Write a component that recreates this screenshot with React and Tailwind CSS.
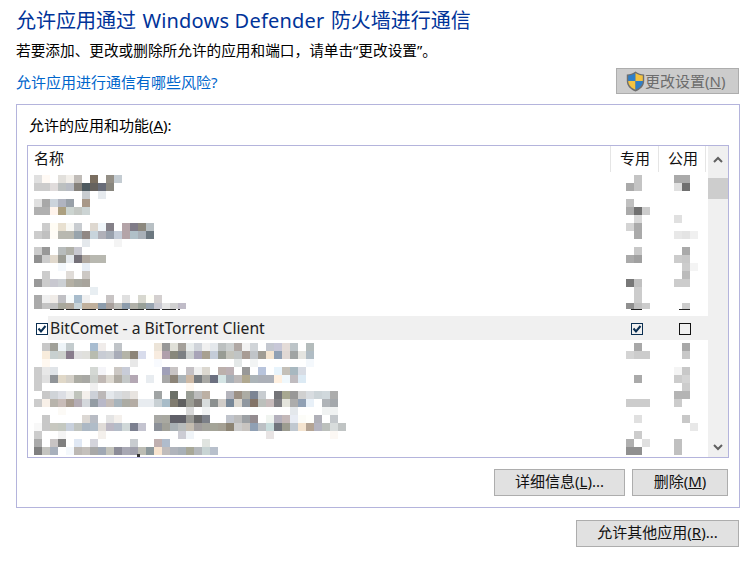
const FONT = "font-['Noto_Sans','Noto_Sans_CJK_SC',sans-serif]";

// Blurred list contents, one string per mosaic row: "column:colour" on an 8px grid starting at x=34
const topRows = [
  [175, "0:e0e0e0 1:fffaf5 3:e2e0dc 4:f2efea 5:c0bcb8 7:7a6e60 9:948f86 10:c4ccd2 75:c4c4c4 80:aaaaaa 81:aaaaaa"],
  [183, "0:cccccc 1:cccccc 2:e0dcdc 3:bcc0c0 4:b8bcc4 5:84807a 6:4e5a60 7:66625e 8:686c78 9:88867e 74:aaaaaa 75:c4c4c4 80:e0e0e0 81:707070"],
  [191, "6:c8ccd0 8:e6eaee"],
  [199, "0:e0e0e0 1:a8a8a8 2:ccd4dc 3:b0b4c0 4:98a0a8 6:a89888 74:c0c0c0"],
  [207, "0:b0b0b0 1:b0b0b0 2:fff4ec 3:aca080 4:ccd4d0 5:c4c8c4 6:ccd4d4 74:aaaaaa 75:707070 76:cccccc"],
  [215, "75:d8d8d8 80:e0e0e0"],
  [223, "1:cccccc 2:fffcf4 3:e8e0d0 4:f8f8f4 5:c8ccd0 7:ded8d0 8:f0f6fa 9:848088 11:b4a4a8 12:807c88 13:8c887e 14:b8c0c4 74:d4d4d4 75:aaaaaa"],
  [231, "0:cccccc 1:c0c0c0 2:fffcf6 3:b8b8b0 4:b8b8b0 5:98a4ac 6:908884 7:c8d4dc 8:b0b0b8 9:98a0ac 10:c4ccd8 11:b4a4a8 12:b0c0c8 13:a8b0b8 14:6c7880 75:aaaaaa 80:e8e8e8 81:e4e4e4 82:f0f0f0"],
  [239, "6:e4e8ec 10:f4f4f4"],
  [247, "0:cccccc 1:989898 3:b8bcbc 4:b0b0a8 5:c8c8d0 75:c8c8c8 81:aaaaaa"],
  [255, "0:909090 1:cccccc 2:e0d8cc 3:9c9c94 4:e4e8ec 5:747078 6:b0a8a0 7:b8b8b0 8:b8b8b0 74:aaaaaa 75:a0a0a0 80:cccccc 81:c8c8c8"],
  [263, "3:f4f8fc 6:e8eef6 81:cccccc 82:f4f4f4"],
  [271, "1:cccccc 4:e0dcd8 6:ccc8c4 81:bbbbbb"],
  [279, "0:999999 1:cccccc 2:c8c8d0 3:ccd0d4 4:b4b0a4 5:a8a8a0 6:a8a49c 74:787878 75:c0c0c0 80:cccccc 81:cccccc"],
  [287, "7:e8eef2 75:cccccc"],
  [295, "0:aaaaaa 1:f0f0f0 2:f0ece8 3:c0c0c4 4:f8fcfc 5:a8bccc 6:f0f0f0 9:c8c4c4 11:e0e0e0 13:d8d8d0 14:fffff8 15:d4d0d0 75:cccccc"],
  [303, "0:aaaaaa 1:c4c4c4 2:c0c0c0 3:a8a89c 4:b0a89c 5:c8d4d8 6:c0b09c 7:c0b09c 8:8c9cac 9:a8a09c 10:c0c0bc 11:8c9cac 12:b0b0a8 13:98a098 14:98a4b0 15:c8c8d0 16:e4e4e4 17:d0d0d0 18:c0bcc8 74:909090 75:c0c0c0 76:cccccc 81:cccccc"],
];

const bottomRows = [
  [343, "1:c8c8c8 2:a0a098 3:eef4f8 4:c4ccce 7:a8bcd0 8:f0ecea 10:c0c4c8 15:ece4d8 16:989898 17:e0e0d8 18:a4a09a 19:e8ecec 20:d0d4da 21:f0f0f0 22:e4e8ec 23:bcc0c0 24:ccd0d0 25:b0a8a4 26:f2f2f2 27:d0d4d8 29:c4c8d0 30:c8c8d8 31:e4dcd8 32:bcc4c8 34:b4bcbc 75:a8a8a8 81:a8a8a8"],
  [351, "1:f8ecdc 2:c8d0d0 3:ccd0cc 4:887c8c 5:e0e0e0 6:e0e0dc 7:b8bcb0 8:c8ccd4 9:ccd0d4 10:a8acb8 11:b4b4a8 12:8c8478 13:d8dcec 15:f8ece0 16:b0a0ac 17:88887c 18:7c8084 19:ccd0d0 20:a8a4b8 21:a8a090 22:c4ccd8 23:989c94 24:c4c4bc 25:c0c4c4 26:a89c94 27:c0c4c8 28:a09c94 29:f4e4d0 30:90a0b4 31:e0d8d4 32:a0a4a4 33:e4e4e0 34:b0bcc4 74:d4d4d4 75:cccccc 76:cccccc 81:c8c8c8"],
  [359, "1:fff8f0 12:e8e8e8 15:f8fafe 25:e4e8e8 27:f2f4f4 34:f4f8fc"],
  [367, "0:cccccc 1:e8e8e8 2:e0e4e8 7:d4d8d4 8:f4f4f8 10:ccc8c4 11:c8ccd8 16:a0a0b8 17:c8c4c4 19:c4c0c4 20:f0f0f0 21:dcd8d0 23:bcb0ac 24:bcb0b4 26:989898 28:b8c4dc 30:e8f4fc 31:c4c0b8 32:a8b8c0 33:d8dce4 80:f4f4f4 81:c8c8c8"],
  [375, "0:cccccc 1:e0e0e0 2:909498 3:e0d8c8 4:d4d0c8 5:acaca4 6:a8a8a4 7:ccd0cc 8:c0b8b4 9:dcd8d0 10:b0aca4 11:c4c8c8 12:b4a8b4 14:e8ecf0 16:a8a8a8 17:8c8478 18:acb4b8 19:ccb8a4 20:787c80 21:a8a8a4 22:6c7080 23:d4e4e4 24:a8b0b8 25:bcb8b8 26:b0a890 27:acb4b8 28:acb0b8 29:acb0b8 30:fff0e0 31:f0f8fc 32:c0bcc0 33:dceaf4 75:aaaaaa 80:cccccc 81:d4d4d4"],
  [383, "0:cccccc 7:f0f0f0 19:fff8f0 81:cccccc"],
  [391, "1:c8c8c8 2:d0d4d8 3:dcdee4 4:ececec 5:c0c4bc 6:f4f0ec 7:ccd0d8 8:bcb8b8 9:e4e8ec 10:d8dce0 11:d8d8d8 12:e8e4e0 15:a0a4a4 17:6c7068 19:989c94 20:bcbcbc 21:bcb0a4 24:b4b4bc 25:9c9084 26:acaca4 27:7c8494 28:c8ccd0 30:747478 31:a8a890 32:989898 33:d0d0d0 34:d8dce0 35:ccd4d8 36:d0d8dc 37:acacac 80:b4b4b4 81:b4b4b4"],
  [399, "0:cccccc 1:f8f0e8 2:b8b4ac 3:c8bcb8 4:a89c90 5:b4acb4 6:d4d8dc 7:949ca4 8:b8b8c8 9:c4bcb8 10:a8b4bc 11:acaca4 12:b4aca4 13:e8ecf0 14:e8ecf0 15:c8d0d4 16:a8bcc8 17:807c70 18:606060 19:9c9c94 20:807c78 21:d8dcdc 22:8c9090 23:d0ccc8 24:788898 25:dcd8d0 26:9098a0 27:847468 28:bcc0bc 29:c8bcbc 30:808084 31:e4e4dc 32:acacac 33:90a0b4 34:e8f0f8 36:b0b4b8 37:a4a8ac 74:cccccc 75:cccccc 76:cccccc 80:cccccc"],
  [407, "3:fcfaf6 19:d8d8d8 21:f0f2f2 32:e4e8ec 36:f0f2f2 37:f0f2f2"],
  [415, "1:c8c8c8 6:dcd8d4 7:b8bcc4 9:e4e4e4 10:f4f0ec 15:a8a8a4 16:a8a8a0 17:606068 18:606068 19:989894 20:686868 21:7c8088 24:c0c4cc 25:bcbcbc 26:9ca0a4 27:948c90 29:f0f4f0 30:b4b0bc 31:c4b8b8 32:e8ecf4 33:fcfcf8 34:fffffc 35:b0b0b8 37:c4c8cc 75:e0e0e0 81:c8c8c8"],
  [423, "0:f8f8f8 1:c8c8c8 2:c8c8c0 3:c4c8c0 4:c8d0dc 5:c0c4c0 6:acb8c4 7:b0bcc8 8:e0dcd8 9:bcb8c4 10:b4bcc8 11:d0d8d8 12:7c8090 13:c4c4d0 15:8c9098 16:a0a098 17:a8b0b4 18:b8bcbc 19:c4bcb0 20:a09c9c 21:a4a49c 22:a4a498 23:a4a094 24:8c8474 25:cccccc 26:c8c4c0 27:90a0b4 28:bcc0c4 29:c8dcdc 30:70747c 31:9c9c90 32:c0c8d0 33:f4e4d0 34:b4a494 35:b4b4c0 36:bcc0bc 37:d8dcdc 38:c0c4c4 82:e8e8e8"],
  [431, "0:cccccc 3:f4f4f4 8:f4f0ec 18:ccccd4 19:f0f4f8 29:e8e4e4 37:fcf8f4 75:cccccc"],
  [439, "0:aaaaaa 2:c8c4c4 3:808080 5:e0e8f4 7:d4d4dc 12:c8ccd0 15:c0b0b0 16:b0bccc 21:e0e4e0 74:b0b0b0 76:e0e0e0 80:c0c0c0"],
  [447, "0:808080 1:c4c4c0 2:a8b0bc 4:f4f8fc 5:bcb8b4 6:c4c0bc 7:a8a8a8 8:a0a8b4 9:c4c4bc 10:8c8c98 11:a8a8b4 12:a0a0ac 13:bcbcb4 14:8c989c 15:f8e4d0 16:c0bcbc 17:b0b4bc 18:a8b0b8 19:a8a898 20:b4b8bc 21:c8d4d4 22:b8c0cc 74:909090 75:909090 80:c0c0c0"],
];

const Mosaic = ({ rows, top, height, children }) => (
  <svg width="678" height={height} viewBox={`28 ${top} 678 ${height}`} className="block shrink-0">
    {rows.flatMap(([y, cells]) =>
      cells.split(" ").map((cell) => {
        const [col, color] = cell.split(":");
        return (
          <rect
            key={`${y}-${col}`}
            x={34 + 8 * Number(col)}
            y={y}
            width="8"
            height={y === 303 ? 6 : 8}
            fill={`#${color}`}
          />
        );
      })
    )}
    {children}
  </svg>
);

const CheckBox = ({ checked }) => (
  <svg width="12" height="12" viewBox="0 0 12 12" className="block shrink-0 mt-[1px]">
    <rect x="0.5" y="0.5" width="11" height="11" fill="none" stroke={checked ? "#0b2f52" : "#111111"} />
    {checked && <path d="M2.5 5.5 L5 8.5 L9.5 3" fill="none" stroke="#0b2f52" strokeWidth="2" />}
  </svg>
);

const Shield = () => (
  <svg width="19" height="21" viewBox="0 0 19 21" className="block shrink-0">
    <path d="M9.5 0.5 C7 2.6 4 3.4 0.8 3.4 V10 C0.8 15 4.5 18.5 9.5 20.5 C14.5 18.5 18.2 15 18.2 10 V3.4 C15 3.4 12 2.6 9.5 0.5 Z" fill="#6f6f6f" />
    <path d="M9.5 2 C7.4 3.6 5 4.4 2.2 4.6 V10 H9.5 Z" fill="#2f7fc8" />
    <path d="M9.5 2 C11.6 3.6 14 4.4 16.8 4.6 V10 H9.5 Z" fill="#f4c33f" />
    <path d="M2.2 10 H9.5 V18.8 C5.4 17 2.4 14.4 2.2 10 Z" fill="#f4c33f" />
    <path d="M16.8 10 H9.5 V18.8 C13.6 17 16.6 14.4 16.8 10 Z" fill="#2f7fc8" />
  </svg>
);

const Chevron = ({ d }) => (
  <svg width="10" height="7" viewBox="0 0 10 7" className="block">
    <path d={d} fill="none" stroke="#606060" strokeWidth="2" />
  </svg>
);

const Button = ({ className = "", children }) => (
  <button className={`h-[27px] pb-[2px] flex items-center justify-center bg-[#e1e1e1] border border-[#adadad] text-[15px] text-[#111] ${className}`}>
    {children}
  </button>
);

export default function App() {
  return (
    <div className={`${FONT} w-[756px] h-[564px] overflow-hidden bg-white px-4 pt-2 text-[15px] text-black`}>
      <h1 className="h-[26px] leading-[26px] text-[20px] font-normal text-[#003399] whitespace-nowrap">
        允许应用通过<span className="px-[1px] tracking-[0.2px]"> Windows Defender </span>防火墙进行通信
      </h1>
      <p className="mt-[7px] h-[19px] leading-[18px] text-[14.67px] whitespace-nowrap">
        若要添加、更改或删除所允许的应用和端口，请单击“更改设置”。
      </p>

      <div className="mt-2 h-[26px] w-[723px] flex items-center justify-between">
        <a className="mt-[1px] text-[#0066cc] leading-[18px]">允许应用进行通信有哪些风险?</a>
        <button className="w-[123px] h-[26px] flex items-center pl-[9px] bg-[#cccccc] border border-[#adadad] text-[#6d6d6d]">
          <Shield />
          <span className="whitespace-nowrap">更改设置(<u>N</u>)</span>
        </button>
      </div>

      <div className="mt-[10px] w-[724px] h-[404px] border border-[#b4b4dc] px-[10px] pt-[11px]">
        <div className="h-[18px] leading-[18px] pl-[2px]">
          允许的应用和功能(<u>A</u>):
        </div>
        <div className="mt-[11px] w-[702px] h-[313px] border border-[#b4b4dc] flex">
          <div className="w-[680px] flex flex-col">
            <div className="h-[26px] flex shrink-0 text-[#111]">
              <div className="w-[582px] pl-[6px] leading-[24px]">名称</div>
              <div className="w-[48px] border-l border-[#e5e5e5] pl-[9px] leading-[24px]">专用</div>
              <div className="w-[48px] border-l border-r border-[#e5e5e5] pl-[9px] leading-[24px]">公用</div>
            </div>
            <Mosaic rows={topRows} top={172} height={144}>
              <path d="M50 309.5h130M631 309.5h11M679 309.5h11" stroke="#222222" strokeWidth="1" strokeDasharray="14 2" />
            </Mosaic>
            <div className="h-[24px] flex items-center shrink-0">
              <div className="w-[20px] pl-[8px]">
                <CheckBox checked />
              </div>
              <div className="flex-1 h-full flex items-center bg-[#f0f0f0]">
                <span className="pl-[2px] pt-[2px] w-[583px] whitespace-nowrap text-[15.7px] leading-none text-[#222]">
                  BitComet - a BitTorrent Client
                </span>
                <CheckBox checked />
                <span className="w-[36px]" />
                <CheckBox />
              </div>
            </div>
            <Mosaic rows={bottomRows} top={340} height={117}>
              <rect x="137" y="454" width="3" height="3" fill="#333333" />
            </Mosaic>
          </div>
          <div className="w-[20px] bg-[#f0f0f0] flex flex-col items-center">
            <div className="h-[26px] flex items-center justify-center">
              <Chevron d="M1 6 L5 2 L9 6" />
            </div>
            <div className="mt-[6px] w-full h-[21px] bg-[#cdcdcd]" />
            <div className="mt-auto h-[20px] flex items-center justify-center">
              <Chevron d="M1 1 L5 5 L9 1" />
            </div>
          </div>
        </div>
        <div className="mt-[11px] flex justify-end gap-[7px] pr-[1px]">
          <Button className="w-[131px]">详细信息(<u>L</u>)...</Button>
          <Button className="w-[96px]">删除(<u>M</u>)</Button>
        </div>
      </div>

      <div className="mt-3 w-[723px] flex justify-end">
        <Button className="w-[163px]">允许其他应用(<u>R</u>)...</Button>
      </div>
    </div>
  );
}
